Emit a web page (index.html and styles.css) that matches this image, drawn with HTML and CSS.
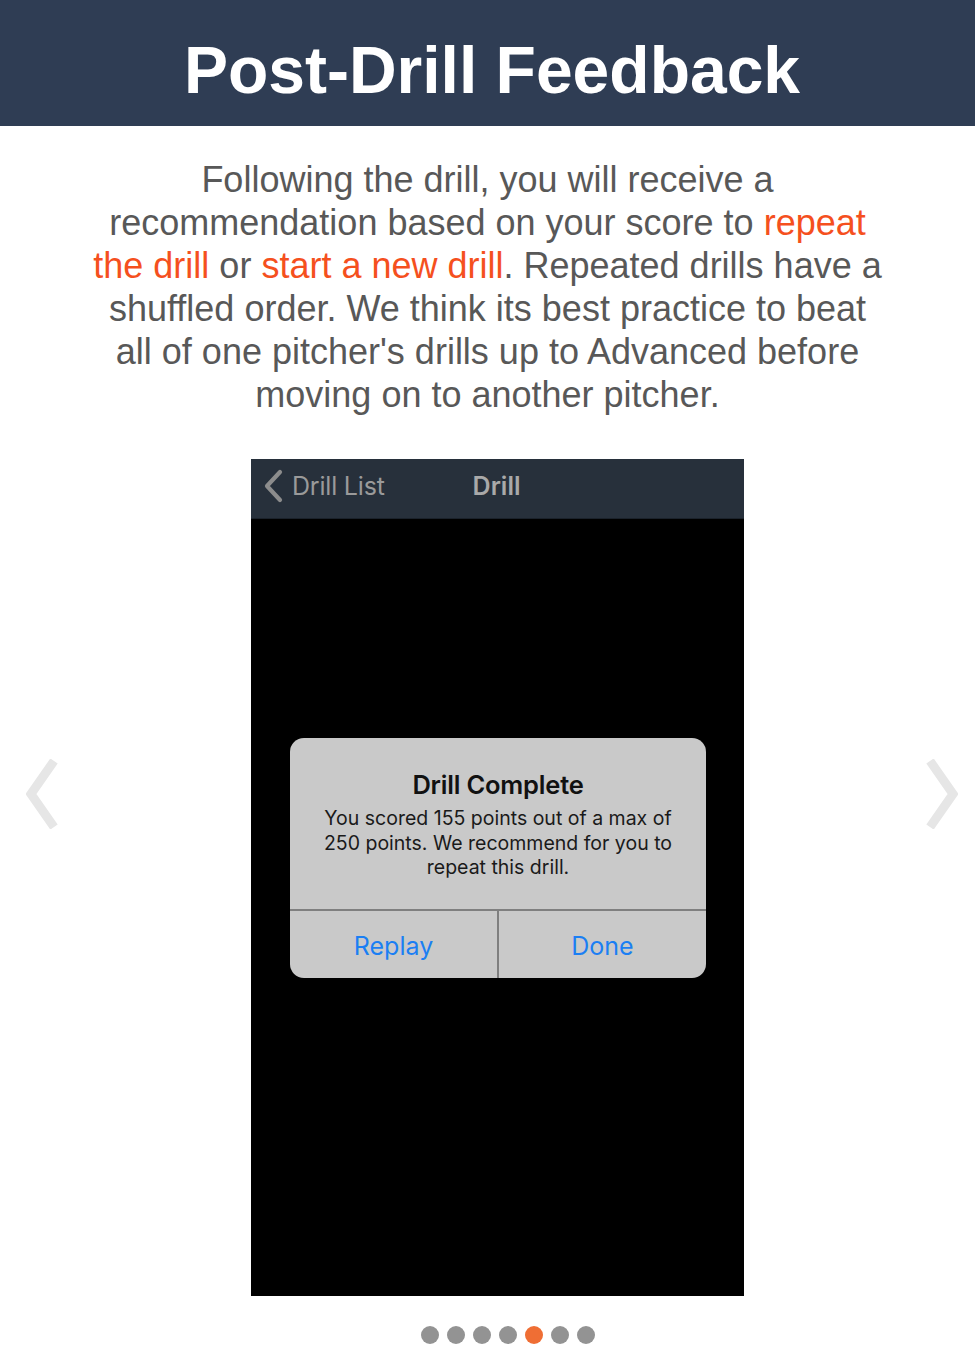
FILE: index.html
```html
<!DOCTYPE html>
<html lang="en">
<head>
<meta charset="utf-8">
<title>Post-Drill Feedback</title>
<link rel="stylesheet" href="styles.css">
</head>
<body>
<header class="banner">
  <h1 class="banner-title">Post-Drill Feedback</h1>
</header>
<p class="intro">Following the drill, you will receive a recommendation based on your score to <span class="hl">repeat</span> <span class="hl">the drill</span> or <span class="hl">start a new drill</span>. Repeated drills have a shuffled order. We think its best practice to beat all of one pitcher's drills up to Advanced before moving on to another pitcher.</p>
<section class="carousel">
  <svg class="arrow arrow-left" width="32" height="70" viewBox="0 0 32 70"><polyline points="28,2 5,35 28,68" fill="none" stroke="#e6e6e6" stroke-width="9"/></svg>
  <div class="phone">
    <div class="navbar">
      <div class="nav-back">
        <svg class="nav-chevron" width="22" height="34" viewBox="0 0 22 34"><polyline points="18,3 5,17 18,31" fill="none" stroke="#8c8c8c" stroke-width="4.2" stroke-linecap="round" stroke-linejoin="round"/></svg>
        <span class="nav-back-label">Drill List</span>
      </div>
      <span class="nav-title">Drill</span>
    </div>
    <div class="screen">
      <div class="alert">
        <div class="alert-body">
          <div class="alert-title">Drill Complete</div>
          <div class="alert-msg">You scored 155 points out of a max of 250 points. We recommend for you to repeat this drill.</div>
        </div>
        <div class="alert-actions">
          <div class="alert-btn">Replay</div>
          <div class="alert-btn">Done</div>
        </div>
      </div>
    </div>
  </div>
  <svg class="arrow arrow-right" width="32" height="70" viewBox="0 0 32 70"><polyline points="4,2 27,35 4,68" fill="none" stroke="#e6e6e6" stroke-width="9"/></svg>
</section>
<nav class="dots">
  <span class="dot"></span>
  <span class="dot"></span>
  <span class="dot"></span>
  <span class="dot"></span>
  <span class="dot active"></span>
  <span class="dot"></span>
  <span class="dot"></span>
</nav>
</body>
</html>
```
FILE: styles.css
```css
* { box-sizing: border-box; }
html, body { margin: 0; padding: 0; background: #fff; }
body { font-family: "Liberation Sans", Arial, sans-serif; width: 975px; }

.banner {
  background: #2f3d54;
  height: 126px;
  display: flex;
  align-items: center;
  justify-content: center;
}
.banner-title {
  margin: 0;
  color: #fff;
  font-size: 66px;
  font-weight: bold;
  line-height: 1;
  padding-top: 14px;
  padding-left: 9px;
}

.intro {
  margin: 32px auto 0;
  width: 800px;
  text-align: center;
  font-size: 36px;
  line-height: 43px;
  color: #585858;
}
.hl { color: #f5501e; }

.carousel {
  display: flex;
  align-items: flex-start;
  margin-top: 43px;
}
.arrow { flex: none; margin-top: 300px; }
.arrow-left { margin-left: 26px; }
.phone {
  flex: none;
  width: 493px;
  height: 837px;
  margin-left: 193px;
  background: #000;
  display: flex;
  flex-direction: column;
}
.arrow-right { margin-left: 182px; }

.navbar {
  height: 60px;
  background: #27303b;
  display: flex;
  align-items: center;
  padding-bottom: 5px;
  font-family: Inter, "Open Sans", sans-serif;
  border-bottom: 1px solid #1b222b;
}
.nav-back { display: flex; align-items: center; margin-left: 11px; }
.nav-chevron { display: block; }
.nav-back-label { color: #9a9a9a; font-size: 25px; margin-left: 8px; letter-spacing: -0.2px; }
.nav-title { color: #a9a9a9; font-size: 25px; font-weight: 600; margin-left: 88px; }

.screen {
  flex: 1;
  padding-top: 219px;
  padding-left: 39px;
  display: flex;
  align-items: flex-start;
}
.alert {
  width: 416px;
  height: 240px;
  background: #c9c9c9;
  border-radius: 14px;
  display: flex;
  flex-direction: column;
  overflow: hidden;
  font-family: Inter, "Open Sans", sans-serif;
}
.alert-body {
  height: 173px;
  border-bottom: 2px solid #7f7f7f;
  text-align: center;
  padding: 31px 18px 0;
}
.alert-title { font-size: 25.5px; font-weight: 600; color: #111; line-height: 32px; letter-spacing: -0.2px; }
.alert-msg { font-size: 19.5px; line-height: 24.5px; color: #1a1a1a; margin-top: 5px; }
.alert-actions { flex: 1; display: flex; }
.alert-btn {
  flex: 1;
  display: flex;
  align-items: center;
  justify-content: center;
  color: #1b7ff3;
  font-size: 25px;
  padding-top: 2px;
}
.alert-btn + .alert-btn { border-left: 2px solid #7f7f7f; }

.dots {
  display: flex;
  justify-content: center;
  gap: 8px;
  padding-left: 41px;
  margin-top: 30px;
}
.dot { width: 18px; height: 18px; border-radius: 50%; background: #939393; }
.dot.active { background: #ef6e34; }
```
